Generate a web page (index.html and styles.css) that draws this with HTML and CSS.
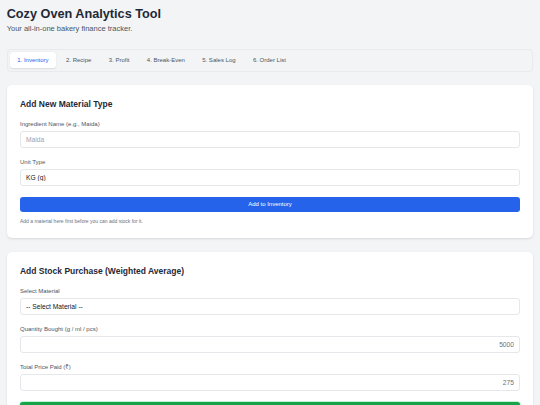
FILE: index.html
```html
<!DOCTYPE html>
<html lang="en">
<head>
<meta charset="utf-8">
<title>Cozy Oven Analytics Tool</title>
<link rel="stylesheet" href="styles.css">
</head>
<body>
<div class="page">
  <header class="header">
    <h1 class="title">Cozy Oven Analytics Tool</h1>
    <p class="subtitle">Your all-in-one bakery finance tracker.</p>
  </header>

  <nav class="tabs">
    <button class="tab active">1. Inventory</button>
    <button class="tab">2. Recipe</button>
    <button class="tab">3. Profit</button>
    <button class="tab">4. Break-Even</button>
    <button class="tab">5. Sales Log</button>
    <button class="tab">6. Order List</button>
  </nav>

  <section class="card">
    <h2 class="card-title">Add New Material Type</h2>
    <div class="field">
      <label class="label">Ingredient Name (e.g., Maida)</label>
      <input class="input" type="text" placeholder="Maida">
    </div>
    <div class="field">
      <label class="label">Unit Type</label>
      <select class="input select"><option>KG (g)</option></select>
    </div>
    <button class="btn btn-blue">Add to Inventory</button>
    <p class="note">Add a material here first before you can add stock for it.</p>
  </section>

  <section class="card">
    <h2 class="card-title">Add Stock Purchase (Weighted Average)</h2>
    <div class="field">
      <label class="label">Select Material</label>
      <select class="input select"><option>-- Select Material --</option></select>
    </div>
    <div class="field">
      <label class="label">Quantity Bought (g / ml / pcs)</label>
      <input class="input num" type="text" placeholder="5000">
    </div>
    <div class="field">
      <label class="label">Total Price Paid (₹)</label>
      <input class="input num" type="text" placeholder="275">
    </div>
    <button class="btn btn-green">Add Stock</button>
  </section>
</div>
</body>
</html>
```

FILE: styles.css
```css
* { box-sizing: border-box; }

html, body {
  margin: 0;
  padding: 0;
  background: #f3f4f6;
  font-family: "Liberation Sans", Arial, "Noto Sans", sans-serif;
  color: #1f2937;
}

.page {
  padding: 6.6px 6.7px;
}

.header {
  margin-bottom: 15.5px;
}

.title {
  margin: 0;
  font-size: 12.7px;
  line-height: 14.4px;
  font-weight: 700;
  color: #1f2937;
}

.subtitle {
  margin: 3.2px 0 0;
  font-size: 7.5px;
  line-height: 9px;
  color: #4b5563;
}

.tabs {
  display: flex;
  gap: 3.6px;
  padding: 2.7px 2.7px;
  border: 1px solid #e9eaee;
  border-radius: 4px;
  background: #f3f4f6;
  margin-bottom: 13px;
}

.tab {
  border: 0;
  background: transparent;
  font-family: inherit;
  font-size: 6px;
  line-height: 9px;
  padding: 3.5px 6.9px;
  border-radius: 3px;
  color: #4b5563;
  cursor: pointer;
}

.tab.active {
  background: #ffffff;
  color: #2563eb;
  box-shadow: 0 0.5px 1.5px rgba(0, 0, 0, 0.1);
}

.card {
  background: #ffffff;
  border-radius: 5px;
  box-shadow: 0 1px 3px rgba(0, 0, 0, 0.08), 0 1px 2px rgba(0, 0, 0, 0.04);
  padding: 14px 13.3px;
  margin-bottom: 14px;
}

.card-title {
  margin: 0 0 11.5px;
  font-size: 8.5px;
  line-height: 10px;
  font-weight: 700;
  color: #1f2937;
}

.field {
  margin-bottom: 10.5px;
}

.label {
  display: block;
  font-size: 6px;
  line-height: 7px;
  color: #4b5563;
  margin-bottom: 3.5px;
}

.input {
  display: block;
  width: 100%;
  height: 17px;
  padding: 0 5px;
  border: 1px solid #e5e7eb;
  border-radius: 3px;
  background: #ffffff;
  font-family: inherit;
  font-size: 6.7px;
  color: #111827;
  outline: none;
}

.input::placeholder {
  color: #9ca3af;
}

.select {
  -webkit-appearance: none;
  appearance: none;
}

.num {
  text-align: right;
}

.num::placeholder {
  color: #6b7280;
}

.btn {
  display: block;
  width: 100%;
  height: 15px;
  border: 0;
  border-radius: 3px;
  font-family: inherit;
  font-size: 6px;
  color: #ffffff;
  cursor: pointer;
}

.btn-blue {
  background: #2563eb;
}

.btn-green {
  background: #16a34a;
  box-shadow: 0 0 0 0.6px #86efac;
}

.note {
  margin: 6.5px 0 0;
  font-size: 5px;
  line-height: 6px;
  color: #6b7280;
}
```
